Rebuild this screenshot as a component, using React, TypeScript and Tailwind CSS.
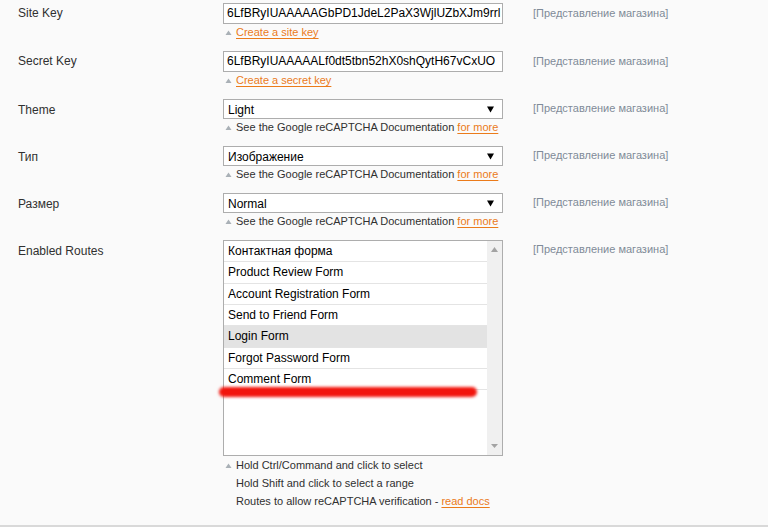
import React from "react";

const scope = "[Представление магазина]";

function Note({ children }: { children: React.ReactNode }) {
      return (
            <div className="flex items-center h-[16px] text-[11px] text-[#303030] leading-[16px]">
                  <svg width="13" height="16" viewBox="0 0 13 16" className="shrink-0">
                        <polygon points="2.5,11 5.5,6.5 8.5,11" fill="#a9b0b6" />
                  </svg>
                  <span>{children}</span>
            </div>
      );
}

function Link({ children }: { children: React.ReactNode }) {
      return <a className="text-[#eb7b1a] underline underline-offset-[2px]">{children}</a>;
}

function Row({ label, children, tall = false }: { label: string; children: React.ReactNode; tall?: boolean }) {
      return (
            <div className="flex mb-[11px]">
                  <div className={`w-[223px] pl-[18px] text-[12px] text-[#303030] ${tall ? "h-[21px] leading-[21px]" : "h-[20px] leading-[22px]"}`}>
                        {label}
                  </div>
                  <div className="w-[280px]">{children}</div>
                  <div className={`ml-[30px] text-[11px] text-[#7f8b98] ${tall ? "h-[21px] leading-[20px]" : "h-[20px] leading-[19px]"}`}>
                        {scope}
                  </div>
            </div>
      );
}

function TextBox({ value }: { value: string }) {
      return (
            <div className="h-[21px] border border-[#adadad] bg-white pl-[3px] text-[12px] leading-[19px] text-black overflow-hidden whitespace-nowrap">
                  {value}
            </div>
      );
}

function Select({ value }: { value: string }) {
      return (
            <div className="relative h-[20px] border border-[#adadad] bg-white pl-[4px] text-[12px] leading-[20px] text-black">
                  {value}
                  <svg width="7" height="7" viewBox="0 0 7 7" className="absolute right-[8px] top-[6px]">
                        <polygon points="0,0.5 7,0.5 3.5,6.5" fill="#000" />
                  </svg>
            </div>
      );
}

const routes = [
      "Контактная форма",
      "Product Review Form",
      "Account Registration Form",
      "Send to Friend Form",
      "Login Form",
      "Forgot Password Form",
      "Comment Form",
];

export default function App() {
      return (
            <div className="min-h-[527px] bg-[#fafafa] font-['Liberation_Sans',Arial,sans-serif]">
                  <div className="pt-[3px] pb-[15px] border-b-2 border-[#d9d9d9]">
                        {/* KEYS */}
                        <Row label="Site Key" tall>
                              <TextBox value="6LfBRyIUAAAAAGbPD1JdeL2PaX3WjlUZbXJm9rrl" />
                              <Note><Link>Create a site key</Link></Note>
                        </Row>
                        <Row label="Secret Key" tall>
                              <TextBox value="6LfBRyIUAAAAALf0dt5tbn52hX0shQytH67vCxUO" />
                              <Note><Link>Create a secret key</Link></Note>
                        </Row>

                        {/* SELECTS */}
                        <Row label="Theme">
                              <Select value="Light" />
                              <Note>See the Google reCAPTCHA Documentation <Link>for more</Link></Note>
                        </Row>
                        <Row label="Тип">
                              <Select value="Изображение" />
                              <Note>See the Google reCAPTCHA Documentation <Link>for more</Link></Note>
                        </Row>
                        <Row label="Размер">
                              <Select value="Normal" />
                              <Note>See the Google reCAPTCHA Documentation <Link>for more</Link></Note>
                        </Row>

                        {/* ROUTES */}
                        <div className="flex">
                              <div className="w-[223px] pl-[18px] text-[12px] text-[#303030] h-[20px] leading-[22px]">
                                    Enabled Routes
                              </div>
                              <div className="w-[280px]">
                                    <div className="relative flex h-[216px] border border-[#adadad] bg-white">
                                          <div className="flex-1">
                                                {routes.map((r) => (
                                                      <div
                                                            key={r}
                                                            className={`h-[21.33px] border-b border-[#e4e4e4] pl-[4px] text-[12px] leading-[21px] text-black ${r === "Login Form" ? "bg-[#e3e3e3]" : ""}`}
                                                      >
                                                            {r}
                                                      </div>
                                                ))}
                                          </div>
                                          <div className="w-[15px] bg-[#f0f0f0] flex flex-col justify-between items-center py-[6px]">
                                                <svg width="7" height="5" viewBox="0 0 7 5">
                                                      <polygon points="0,5 3.5,0 7,5" fill="#a3a3a3" />
                                                </svg>
                                                <svg width="7" height="5" viewBox="0 0 7 5">
                                                      <polygon points="0,0 7,0 3.5,4" fill="#a3a3a3" />
                                                </svg>
                                          </div>
                                          {/* red marker stroke */}
                                          <div className="absolute left-[-5px] top-[146px] w-[258px] h-[10px] rounded-full bg-[#f2140c] blur-[1.5px]" />
                                    </div>
                                    <div className="text-[11px] text-[#303030] leading-[18px]">
                                          <div className="flex items-center">
                                                <svg width="13" height="18" viewBox="0 0 13 18" className="shrink-0">
                                                      <polygon points="2.5,12 5.5,7.5 8.5,12" fill="#a9b0b6" />
                                                </svg>
                                                <span>Hold Ctrl/Command and click to select</span>
                                          </div>
                                          <div className="pl-[13px]">Hold Shift and click to select a range</div>
                                          <div className="pl-[13px]">
                                                Routes to allow reCAPTCHA verification - <Link>read docs</Link>
                                          </div>
                                    </div>
                              </div>
                              <div className="ml-[30px] text-[11px] text-[#7f8b98] h-[20px] leading-[19px]">{scope}</div>
                        </div>
                  </div>
            </div>
      );
}
